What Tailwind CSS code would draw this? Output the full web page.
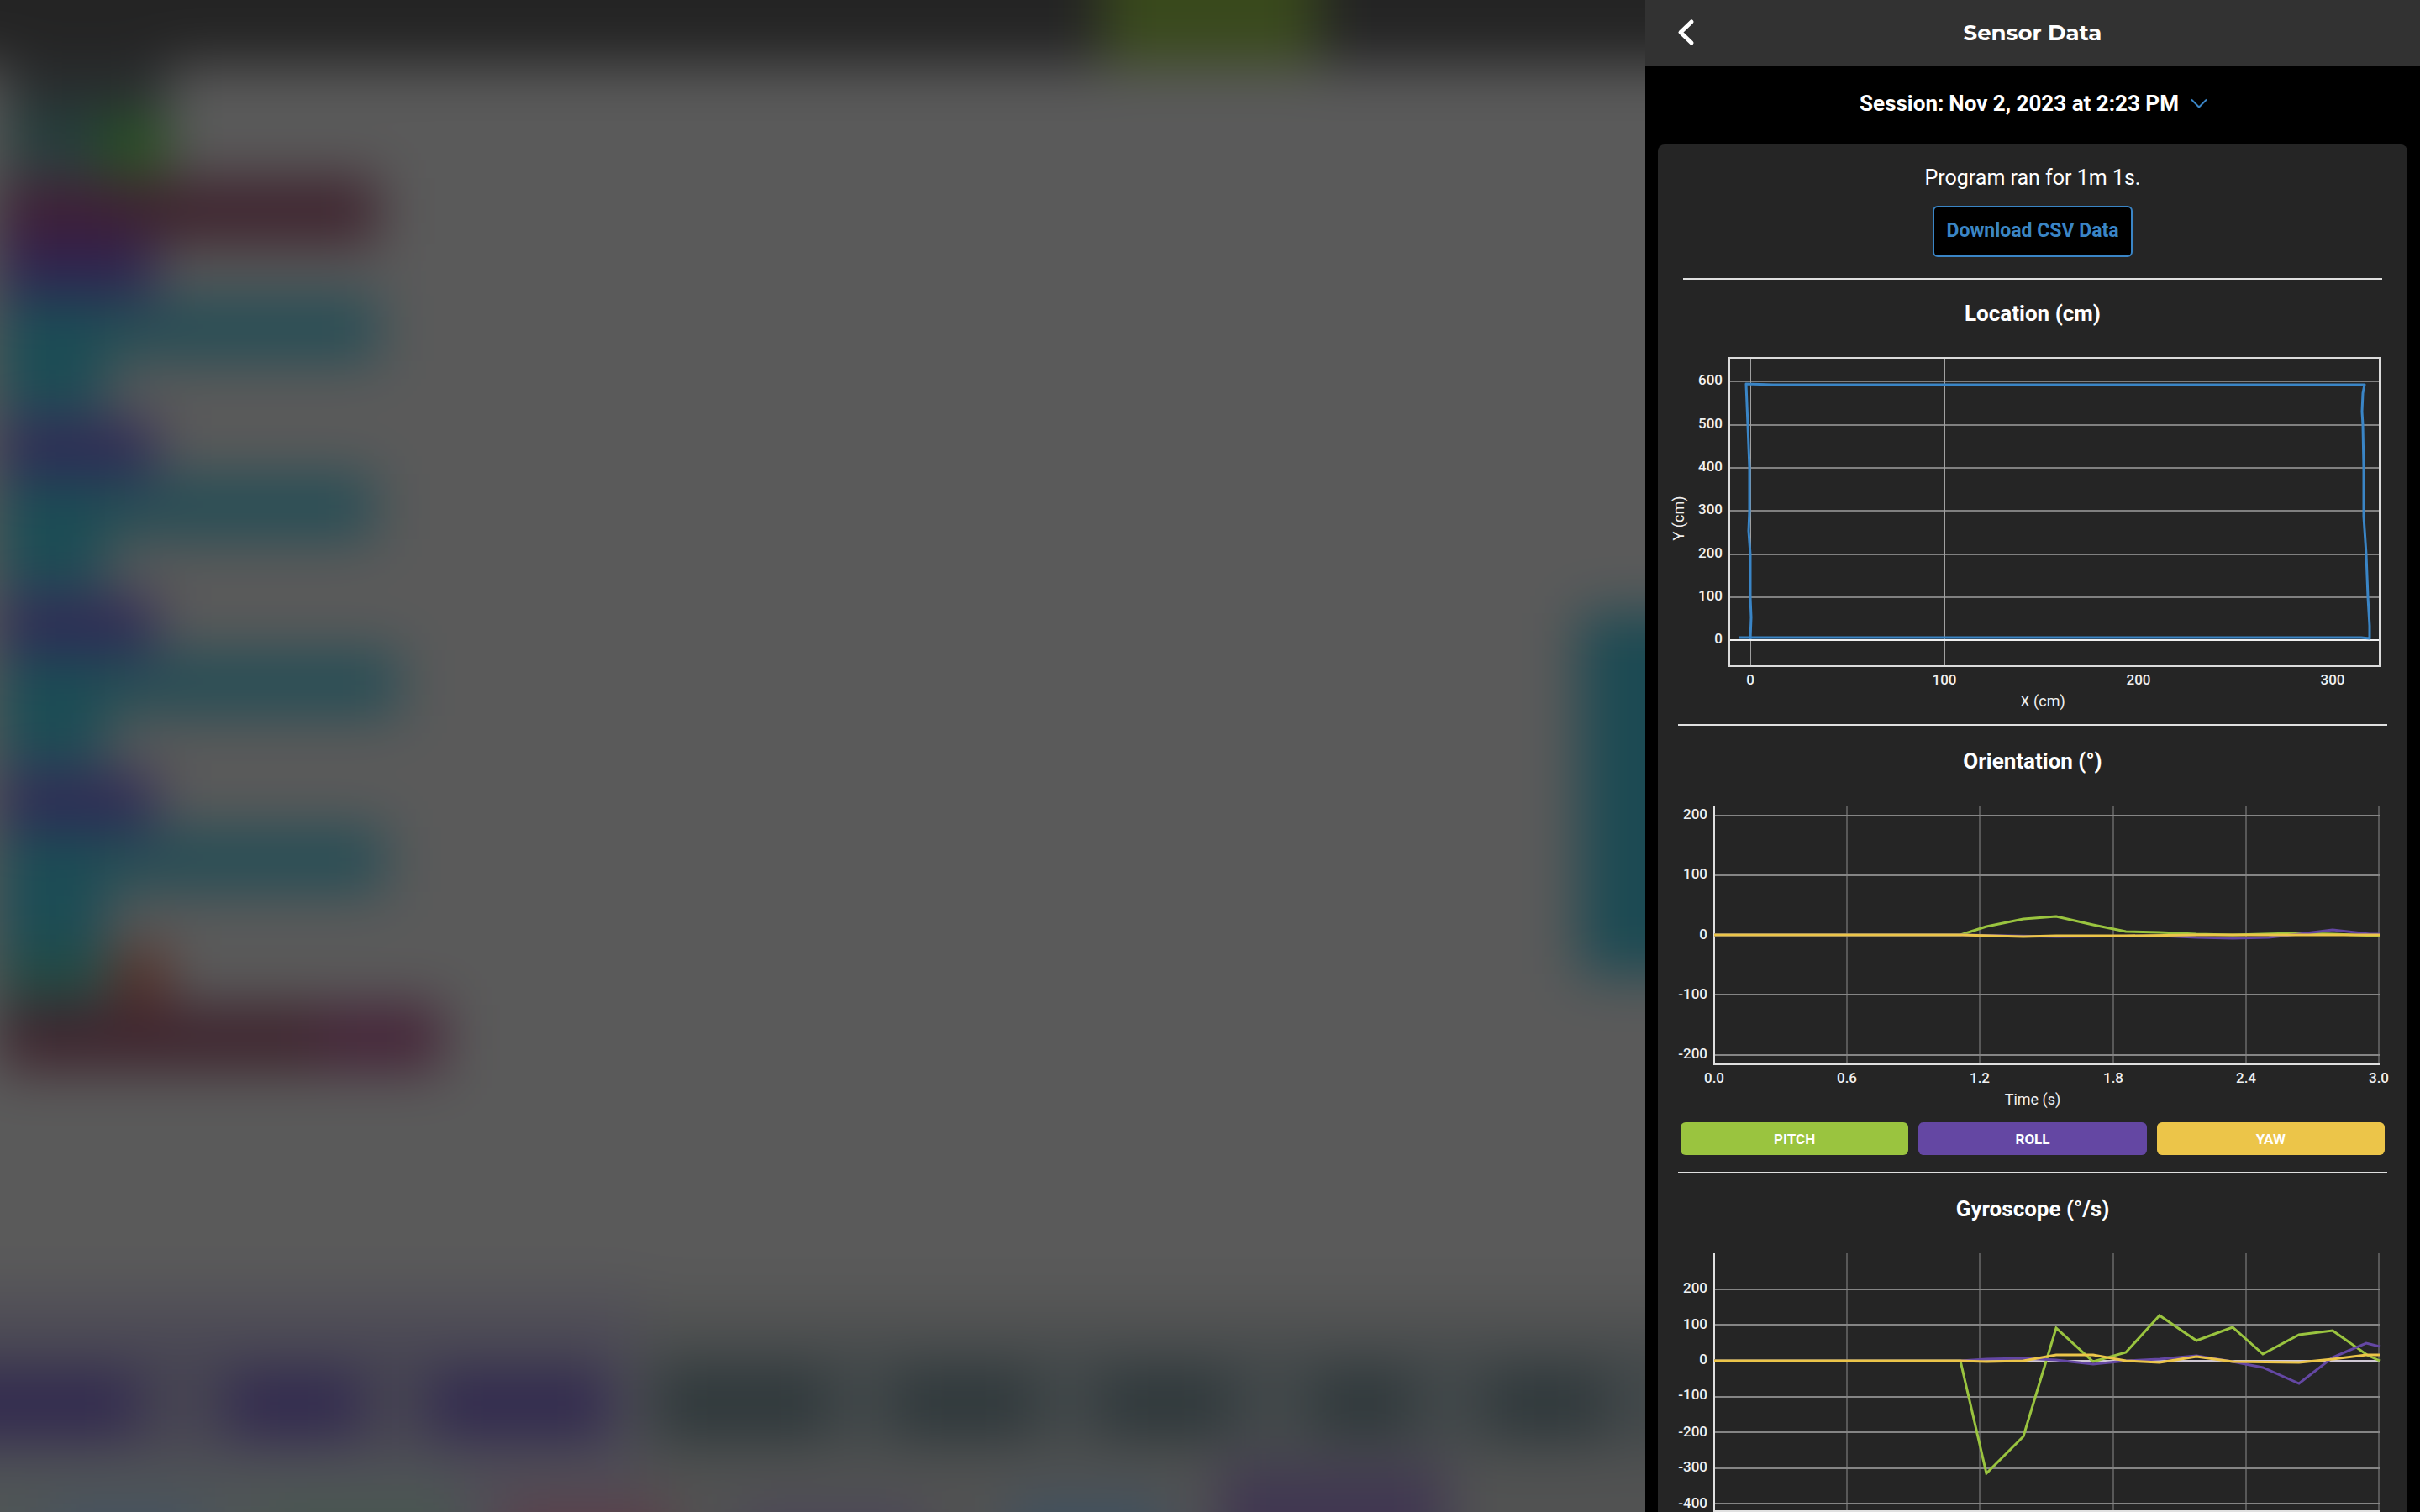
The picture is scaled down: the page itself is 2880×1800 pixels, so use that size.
<!DOCTYPE html>
<html lang="en">
<head>
<meta charset="utf-8">
<title>Sensor Data</title>
<script src="https://cdn.jsdelivr.net/npm/@tailwindcss/browser@4"></script>
</head>
<body class="bg-black font-[Roboto,sans-serif] text-white">
<div class="flex h-screen overflow-hidden">

  <!-- Program canvas, dimmed and blurred behind the open panel -->
  <main class="min-w-0 flex-1 overflow-hidden bg-[#595959]" aria-hidden="true">
    <svg class="size-full overflow-visible blur-[32px]" viewBox="0 0 1958 1800" preserveAspectRatio="xMinYMin slice">
      <rect x="-100" y="-100" width="2200" height="2100" fill="#5a5a5a"/>
      <rect x="-100" y="-100" width="2200" height="177" fill="#242424"/>
      <rect x="1312" y="-100" width="256" height="176" fill="#39491c"/>
      <rect x="8" y="77" width="190" height="60" fill="#2b2e30"/>
      <rect x="8" y="130" width="190" height="75" fill="#243e3c"/>
      <rect x="125" y="140" width="73" height="68" fill="#27521e"/>
      <rect x="0" y="212" width="450" height="78" fill="#3e232e"/>
      <rect x="0" y="225" width="150" height="70" fill="#3e1e37"/>
      <rect x="0" y="288" width="185" height="64" fill="#302352"/>
      <g fill="#264d55">
        <rect x="0" y="352" width="450" height="78"/>
        <rect x="0" y="564" width="445" height="78"/>
        <rect x="0" y="774" width="475" height="78"/>
        <rect x="0" y="984" width="458" height="78"/>
      </g>
      <g fill="#1b4c55">
        <rect x="0" y="352" width="125" height="142"/>
        <rect x="0" y="564" width="125" height="140"/>
        <rect x="0" y="774" width="125" height="140"/>
        <rect x="0" y="984" width="125" height="150"/>
      </g>
      <g fill="#2f2956">
        <rect x="0" y="500" width="185" height="66"/>
        <rect x="0" y="710" width="185" height="66"/>
        <rect x="0" y="920" width="185" height="66"/>
      </g>
      <rect x="0" y="1134" width="125" height="62" fill="#234a42"/>
      <rect x="138" y="1128" width="58" height="66" fill="#552b22"/>
      <rect x="0" y="1196" width="528" height="78" fill="#3e242e"/>
      <rect x="380" y="1196" width="148" height="78" fill="#452438"/>
      <rect x="1880" y="730" width="200" height="430" fill="#1c4a53"/>

      <!-- Block tray -->
      <rect x="-100" y="1536" width="860" height="400" fill="#504e57"/>
      <rect x="760" y="1546" width="1300" height="400" fill="#515252"/>
      <rect x="-100" y="1596" width="830" height="130" fill="#464452"/>
      <rect x="760" y="1604" width="1300" height="122" fill="#42484a"/>
      <g fill="#31294f">
        <rect x="-100" y="1636" width="262" height="74"/>
        <rect x="272" y="1636" width="156" height="74"/>
        <rect x="514" y="1636" width="212" height="74"/>
      </g>
      <g fill="#2f383b">
        <rect x="785" y="1632" width="200" height="80"/>
        <rect x="1065" y="1632" width="165" height="80"/>
        <rect x="1310" y="1632" width="155" height="80"/>
        <rect x="1565" y="1632" width="115" height="80"/>
        <rect x="1770" y="1632" width="140" height="80"/>
      </g>
      <rect x="-100" y="1745" width="640" height="160" fill="#4f5556"/>
      <rect x="60" y="1795" width="180" height="120" fill="#445262"/>
      <rect x="320" y="1795" width="230" height="120" fill="#46564f"/>
      <rect x="600" y="1788" width="200" height="120" fill="#5b3f4a"/>
      <rect x="880" y="1798" width="220" height="120" fill="#4a4459"/>
      <rect x="1200" y="1785" width="190" height="120" fill="#3e5060"/>
      <rect x="1450" y="1745" width="270" height="200" fill="#403751"/>
    </svg>
  </main>

  <aside class="flex h-full w-[922px] shrink-0 flex-col overflow-hidden bg-black">
    <header class="grid h-[78px] shrink-0 grid-cols-[96px_1fr_96px] items-center bg-[#323232]">
      <button type="button" aria-label="Back" class="flex h-full items-center pl-9">
        <svg class="h-9 w-6" viewBox="0 0 24 36" fill="none" stroke="#fff" stroke-width="5" stroke-linecap="round" stroke-linejoin="round"><path d="M19 5 6 17.500 19 30"/></svg>
      </button>
      <h1 class="text-center font-[Montserrat,Inter,sans-serif] text-[26px] leading-8 font-bold">Sensor Data</h1>
    </header>

    <div class="flex h-[94px] shrink-0 items-center justify-center pb-1 pl-0.5 text-[26px] leading-8 font-bold">
      <label for="session" class="mr-1.5">Session:</label>
      <select id="session" class="appearance-none bg-transparent py-2 [field-sizing:content]">
        <option>Nov 2, 2023 at 2:23 PM</option>
      </select>
      <svg class="ml-3.5 h-3 w-5" viewBox="0 0 20 12" fill="none" stroke="#3a85c6" stroke-width="2"><path d="M1 1.500 10 10.500 19 1.500"/></svg>
    </div>

    <div class="mx-[15px] flex flex-col rounded-t-lg bg-[#252525] pt-6">
      <p class="text-center text-[25px] leading-8">Program ran for 1m 1s.</p>
      <button type="button" class="mt-[17px] h-[61px] self-center rounded-md border-2 border-[#3a85c6] bg-black px-3.5 text-[23px] font-bold text-[#3a85c6]">Download CSV Data</button>
      <hr class="mx-[30px] mt-[25px] border-t-2 border-[#dfe0e0]">

      <section>
        <h2 class="mt-6 text-center text-[26px] leading-8 font-bold">Location (cm)</h2>
        <svg class="block w-full" viewBox="1973 389 892 473" fill="none" role="img" aria-label="Location chart">
          <path stroke="#808080" stroke-width="2" d="M2058 454H2832M2058 506H2832M2058 557H2832M2058 608H2832M2058 660H2832M2058 711H2832"/>
          <path stroke="#a0a0a0" stroke-width="1" d="M2083.500 426V793M2314.500 426V793M2545.500 426V793M2776.500 426V793"/>
          <path stroke="#f0f0f0" stroke-width="2" d="M2058 762H2832"/>
          <rect x="2058" y="426" width="774" height="367" stroke="#dcdcdc" stroke-width="2"/>
          <path stroke="#3a85c6" stroke-width="3" stroke-linejoin="round" d="M2070 759H2810L2820 760 2820 745 2818 711 2816 660 2813 615 2813 557 2812 506 2811 490 2812 468 2814 458H2110L2078 457 2080 506 2082 557 2082 608 2081 632 2083 660 2083 711 2084 735 2083 761"/>
          <g fill="#f0f0f0" font-size="17" font-weight="500" text-anchor="end">
            <text x="2050" y="458">600</text><text x="2050" y="510">500</text><text x="2050" y="561">400</text><text x="2050" y="612">300</text><text x="2050" y="664">200</text><text x="2050" y="715">100</text><text x="2050" y="766">0</text>
          </g>
          <g fill="#f0f0f0" font-size="17" font-weight="500" text-anchor="middle">
            <text x="2083" y="815">0</text><text x="2314" y="815">100</text><text x="2545" y="815">200</text><text x="2776" y="815">300</text>
          </g>
          <g fill="#f0f0f0" font-size="18" text-anchor="middle">
            <text x="2431" y="841">X (cm)</text>
            <text transform="translate(2004 617) rotate(-90)">Y (cm)</text>
          </g>
        </svg>
        <hr class="mx-6 border-t-2 border-[#dfe0e0]">
      </section>

      <section>
        <h2 class="mt-[26px] text-center text-[26px] leading-8 font-bold">Orientation (°)</h2>
        <svg class="block w-full" viewBox="1973 922 892 414" fill="none" role="img" aria-label="Orientation chart">
          <path stroke="#585858" stroke-width="2" d="M2198 959V1267M2356 959V1267M2515 959V1267M2673 959V1267M2831 959V1267"/>
          <path stroke="#858585" stroke-width="2" d="M2040 971H2832M2040 1042H2832M2040 1184H2832M2040 1256H2832"/>
          <path stroke="#e0e0e0" stroke-width="2" d="M2040 959V1267H2832"/>
          <g stroke-width="3" stroke-linejoin="round">
            <path stroke="#9ac43f" d="M2040 1113H2333L2364 1103 2408 1094 2447 1091 2491 1101 2530 1109 2570 1110 2614 1112 2657 1113 2693 1112 2730 1111 2776 1112 2832 1114"/>
            <path stroke="#6447a3" d="M2040 1113H2333L2447 1115 2570 1114 2614 1116 2657 1117 2700 1116 2736 1112 2776 1107 2820 1112H2832"/>
            <path stroke="#ecc549" d="M2040 1113H2333L2408 1115 2447 1114H2530L2614 1113H2832"/>
          </g>
          <g fill="#f0f0f0" font-size="17" font-weight="500" text-anchor="end">
            <text x="2032" y="975">200</text><text x="2032" y="1046">100</text><text x="2032" y="1118">0</text><text x="2032" y="1189">-100</text><text x="2032" y="1260">-200</text>
          </g>
          <g fill="#f0f0f0" font-size="17" font-weight="500" text-anchor="middle">
            <text x="2040" y="1289">0.0</text><text x="2198" y="1289">0.6</text><text x="2356" y="1289">1.2</text><text x="2515" y="1289">1.8</text><text x="2673" y="1289">2.4</text><text x="2831" y="1289">3.0</text>
          </g>
          <text x="2419" y="1315" fill="#f0f0f0" font-size="18" text-anchor="middle">Time (s)</text>
        </svg>
        <div class="mx-[27px] grid grid-cols-3 gap-3 text-[17px] leading-6 font-bold">
          <button type="button" class="h-[39px] rounded-md bg-[#9ac43f]">PITCH</button>
          <button type="button" class="h-[39px] rounded-md bg-[#6447a3]">ROLL</button>
          <button type="button" class="h-[39px] rounded-md bg-[#ecc549]">YAW</button>
        </div>
        <hr class="mx-6 mt-5 border-t-2 border-[#dfe0e0]">
      </section>

      <section>
        <h2 class="mt-[26px] text-center text-[26px] leading-8 font-bold">Gyroscope (°/s)</h2>
        <svg class="block w-full" viewBox="1973 1455 892 414" fill="none" role="img" aria-label="Gyroscope chart">
          <path stroke="#585858" stroke-width="2" d="M2198 1492V1799M2356 1492V1799M2515 1492V1799M2673 1492V1799M2831 1492V1799"/>
          <path stroke="#858585" stroke-width="2" d="M2040 1535H2832M2040 1577H2832M2040 1663H2832M2040 1705H2832M2040 1748H2832M2040 1790H2832"/>
          <path stroke="#d0c8d4" stroke-width="2" d="M2040 1620H2832"/>
          <path stroke="#e0e0e0" stroke-width="2" d="M2040 1492V1799H2832"/>
          <g stroke-width="3">
            <path stroke="#9ac43f" d="M2040 1620H2333L2364 1754 2408 1710 2447 1581 2491 1621 2530 1610 2570 1566 2614 1596 2657 1580 2693 1612 2736 1589 2776 1584 2817 1613 2832 1620"/>
            <path stroke="#6447a3" d="M2040 1620H2333L2364 1618 2408 1617 2447 1619 2491 1624 2530 1620 2570 1618 2614 1614 2657 1621 2693 1628 2736 1647 2776 1616 2816 1599 2832 1603"/>
            <path stroke="#ecc549" d="M2040 1620H2333L2364 1621 2408 1620 2447 1613H2491L2530 1620 2570 1622 2614 1615 2657 1621 2736 1622 2776 1618 2816 1613H2832"/>
          </g>
          <g fill="#f0f0f0" font-size="17" font-weight="500" text-anchor="end">
            <text x="2032" y="1539">200</text><text x="2032" y="1582">100</text><text x="2032" y="1624">0</text><text x="2032" y="1666">-100</text><text x="2032" y="1710">-200</text><text x="2032" y="1752">-300</text><text x="2032" y="1795">-400</text>
          </g>
        </svg>
      </section>
    </div>
  </aside>
</div>
</body>
</html>
